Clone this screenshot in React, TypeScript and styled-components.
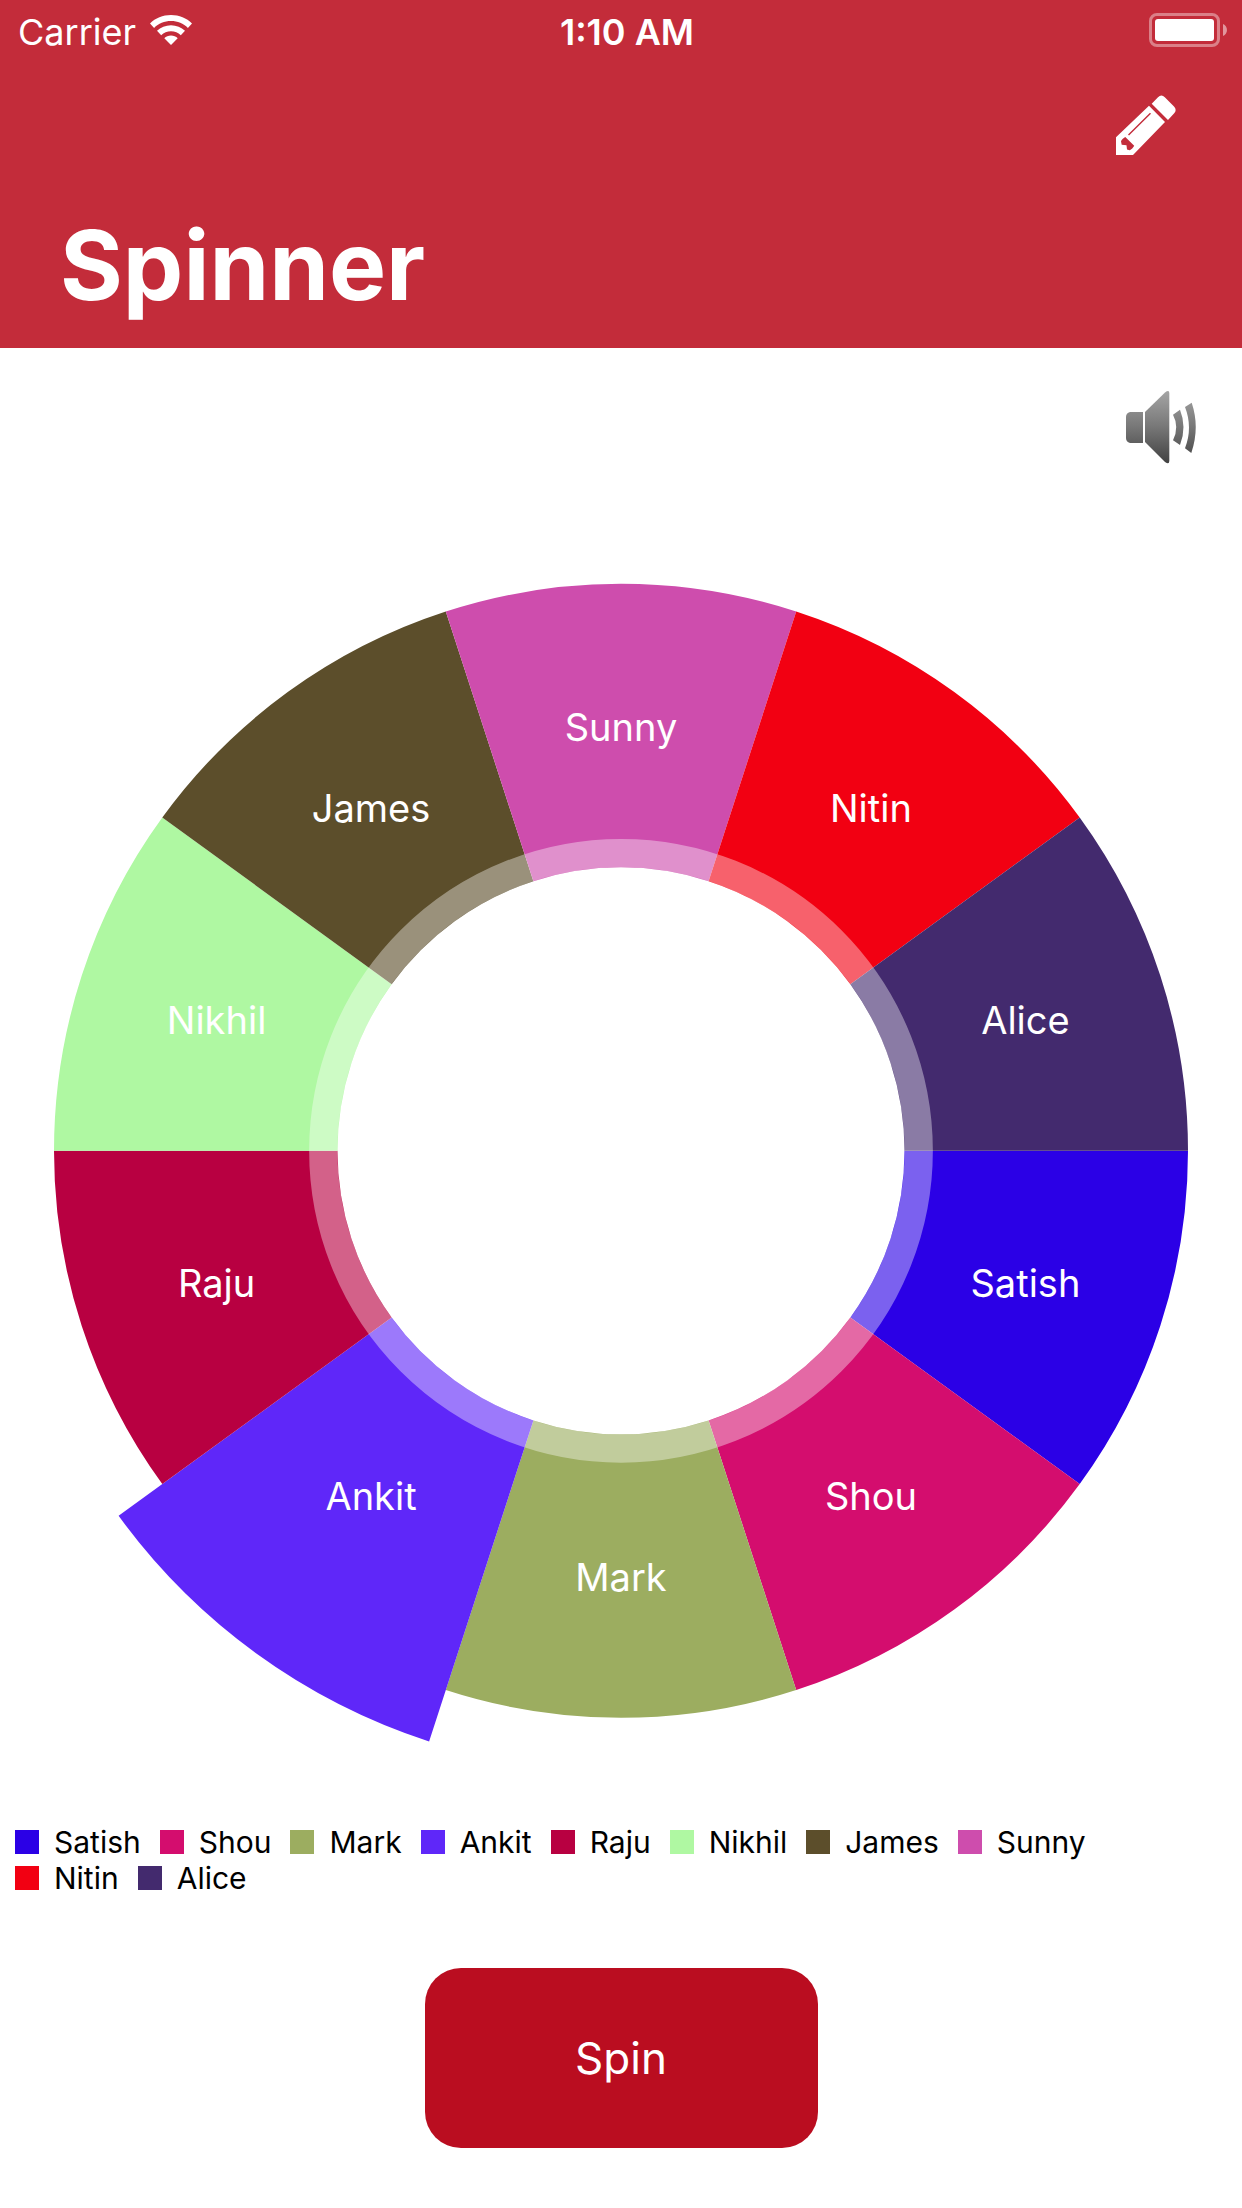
import React, { useState } from "react";
import styled, { createGlobalStyle } from "styled-components";

const GlobalStyle = createGlobalStyle`
  * { box-sizing: border-box; }
  body {
    margin: 0;
    background: #ffffff;
    font-family: Inter, Roboto, "Liberation Sans", sans-serif;
  }
`;

const Screen = styled.div`
  display: flex;
  flex-direction: column;
  min-height: 100vh;
`;

const Header = styled.header`
  display: flex;
  flex-direction: column;
  background: #c32c3a;
  color: #ffffff;
`;

const StatusBar = styled.div`
  display: grid;
  grid-template-columns: 1fr auto 1fr;
  align-items: center;
  height: 60px;
  padding: 0 15px 0 18px;
  font-size: 36px;
  line-height: 44px;
`;

const Signal = styled.div`
  display: flex;
  align-items: center;
  gap: 14px;
`;

const Carrier = styled.span`
  padding-top: 3px;
`;

const Time = styled.time`
  padding: 3px 0 0 9px;
  font-weight: 600;
`;

const Battery = styled.svg`
  justify-self: end;
  width: 78px;
  height: 34px;
`;

const NavBar = styled.nav`
  display: flex;
  justify-content: flex-end;
  padding: 35px 66px 0;
`;

const IconButton = styled.button<{ $width: number; $height: number }>`
  display: block;
  width: ${(p) => p.$width}px;
  height: ${(p) => p.$height}px;
  padding: 0;
  border: 0;
  background: none;
  color: inherit;
  cursor: pointer;

  svg {
    display: block;
    width: 100%;
    height: 100%;
  }
`;

const Title = styled.h1`
  margin: 0;
  padding: 50px 60px 23px;
  font-size: 96px;
  font-weight: 700;
  line-height: 120px;
`;

const Main = styled.main`
  display: flex;
  flex-direction: column;
`;

const SoundRow = styled.div`
  display: flex;
  justify-content: flex-end;
  padding: 42px 45px 66px;
`;

const Wheel = styled.svg`
  display: block;
  width: 100%;
  height: auto;
`;

const SliceLabel = styled.text`
  fill: #ffffff;
  font-size: 38px;
  text-anchor: middle;
`;

const Legend = styled.ul`
  display: flex;
  flex-wrap: wrap;
  column-gap: 19px;
  width: 95%;
  margin: 52px 0 72px;
  padding: 0 0 0 15px;
  list-style: none;
`;

const LegendItem = styled.li`
  display: flex;
  align-items: center;
  gap: 15px;
  color: #000000;
  font-size: 30px;
  line-height: 36px;
`;

const Swatch = styled.span<{ $color: string }>`
  width: 24px;
  height: 24px;
  background: ${(p) => p.$color};
`;

const SpinButton = styled.button`
  align-self: center;
  width: 393px;
  height: 180px;
  margin-bottom: 60px;
  border: 0;
  border-radius: 36px;
  background: #ba0d20;
  color: #ffffff;
  font-family: inherit;
  font-size: 44px;
  cursor: pointer;
`;

const people = [
  { name: "Satish", color: "#2b00e6" },
  { name: "Shou", color: "#d40d6e" },
  { name: "Mark", color: "#9cad60" },
  { name: "Ankit", color: "#5f27f9" },
  { name: "Raju", color: "#b80041" },
  { name: "Nikhil", color: "#aff8a2" },
  { name: "James", color: "#5c4e2b" },
  { name: "Sunny", color: "#ce4dad" },
  { name: "Nitin", color: "#f20012" },
  { name: "Alice", color: "#432a6e" },
];

const CX = 621;
const CY = 620.8;
const RADIUS = 567;
const HOLE = RADIUS * 0.5;
const VEIL = RADIUS * 0.55;
const SHIFT = 54;

const point = (r: number, angle: number) =>
  `${CX + r * Math.cos(angle)} ${CY + r * Math.sin(angle)}`;

const slicePath = (index: number, outer: number) => {
  const step = (Math.PI * 2) / people.length;
  const a = index * step;
  const b = a + step;
  return `M${point(HOLE, a)} L${point(outer, a)} A${outer} ${outer} 0 0 1 ${point(outer, b)} L${point(HOLE, b)} A${HOLE} ${HOLE} 0 0 0 ${point(HOLE, a)} Z`;
};

const WifiIcon = () => (
  <svg width="42" height="30" viewBox="0 0 42 30" fill="#ffffff" aria-hidden="true">
    <path d="M21 0C29.2 0 36.6 3.1 42 8.4L37.9 12.9C33.5 8.6 27.6 6 21 6S8.5 8.6 4.1 12.9L0 8.4C5.4 3.1 12.8 0 21 0Z" />
    <path d="M21 10.2C26.4 10.2 31.3 12.3 35 15.8L30.8 20.2C28.2 17.8 24.8 16.2 21 16.2S13.8 17.8 11.2 20.2L7 15.8C10.7 12.3 15.6 10.2 21 10.2Z" />
    <path d="M21 20.5C23.6 20.5 26 21.5 27.7 23.2L21 30L14.3 23.2C16 21.5 18.4 20.5 21 20.5Z" />
  </svg>
);

const BatteryIcon = () => (
  <Battery viewBox="0 0 78 34" role="img" aria-label="Battery full">
    <rect x="1.5" y="1.5" width="68" height="31" rx="6.5" fill="none" stroke="#ffffff" strokeOpacity=".4" strokeWidth="3" />
    <rect x="6" y="6" width="59" height="22" rx="3" fill="#ffffff" />
    <path d="M74 11C79.3 13 79.3 21 74 23Z" fill="#ffffff" fillOpacity=".5" />
  </Battery>
);

const PencilIcon = () => (
  <svg viewBox="0 0 60 60" fill="currentColor" aria-hidden="true">
    <path
      fillRule="evenodd"
      d="M0 42.3L33 10.8L49 27L17 60H0ZM9.3 42C8 42.6 5.5 44.6 5 46.2L5.7 49.7L10.5 50.2L11 54.6L13.7 55.2C15.2 54.5 17.500 52.5 18.2 50.7ZM12 39.5L13 40.5L35 18.7L34 17.7Z"
    />
    <path d="M35.7 8.7L42 2.3Q45.3-1.2 48.8 2.2L58 11.5Q61.2 15 58.2 18.3L52 24.9Z" />
  </svg>
);

const SpeakerIcon = () => (
  <svg viewBox="0 0 72 74" fill="url(#metal)" aria-hidden="true">
    <defs>
      <linearGradient id="metal" gradientUnits="userSpaceOnUse" x1="0" y1="0" x2="0" y2="74">
        <stop offset="0" stopColor="#a6a6a6" />
        <stop offset=".5" stopColor="#777777" />
        <stop offset="1" stopColor="#404040" />
      </linearGradient>
    </defs>
    <path d="M5 22H18V53H5Q1 52 1 48V27Q1 23 5 22Z" />
    <path d="M20 22L40 2.5Q44.3-.5 44.3 3V71Q44.3 75 40 72L20 52Z" />
    <path d="M48 24.7L55 19.7Q62 37 55 55L48 50.3Q54.5 37 48 24.7Z" />
    <path d="M60 17L66.7 12.7Q75 37.5 66.3 63L60 58.3Q68 37.5 60 17Z" />
  </svg>
);

export default function App() {
  const [selected, setSelected] = useState(3);
  const spin = () => setSelected(Math.floor(Math.random() * people.length));

  return (
    <>
      <GlobalStyle />
      <Screen>
        <Header>
          <StatusBar>
            <Signal>
              <Carrier>Carrier</Carrier>
              <WifiIcon />
            </Signal>
            <Time>1:10 AM</Time>
            <BatteryIcon />
          </StatusBar>
          <NavBar>
            <IconButton $width={60} $height={60} aria-label="Edit names">
              <PencilIcon />
            </IconButton>
          </NavBar>
          <Title>Spinner</Title>
        </Header>
        <Main>
          <SoundRow>
            <IconButton $width={72} $height={74} aria-label="Sound">
              <SpeakerIcon />
            </IconButton>
          </SoundRow>
          <Wheel viewBox="0 0 1242 1242" role="img" aria-label="Name wheel">
            {people.map((person, i) => (
              <path
                key={person.name}
                d={slicePath(i, i === selected ? RADIUS + SHIFT : RADIUS)}
                fill={person.color}
              />
            ))}
            <circle
              cx={CX}
              cy={CY}
              r={(HOLE + VEIL) / 2}
              fill="none"
              stroke="#ffffff"
              strokeOpacity=".38"
              strokeWidth={VEIL - HOLE}
            />
            {people.map((person, i) => {
              const angle = ((i + 0.5) * Math.PI * 2) / people.length;
              return (
                <SliceLabel
                  key={person.name}
                  x={CX + RADIUS * 0.75 * Math.cos(angle)}
                  y={CY + RADIUS * 0.75 * Math.sin(angle) + 15}
                >
                  {person.name}
                </SliceLabel>
              );
            })}
          </Wheel>
          <Legend>
            {people.map((person) => (
              <LegendItem key={person.name}>
                <Swatch $color={person.color} />
                {person.name}
              </LegendItem>
            ))}
          </Legend>
          <SpinButton onClick={spin}>Spin</SpinButton>
        </Main>
      </Screen>
    </>
  );
}
